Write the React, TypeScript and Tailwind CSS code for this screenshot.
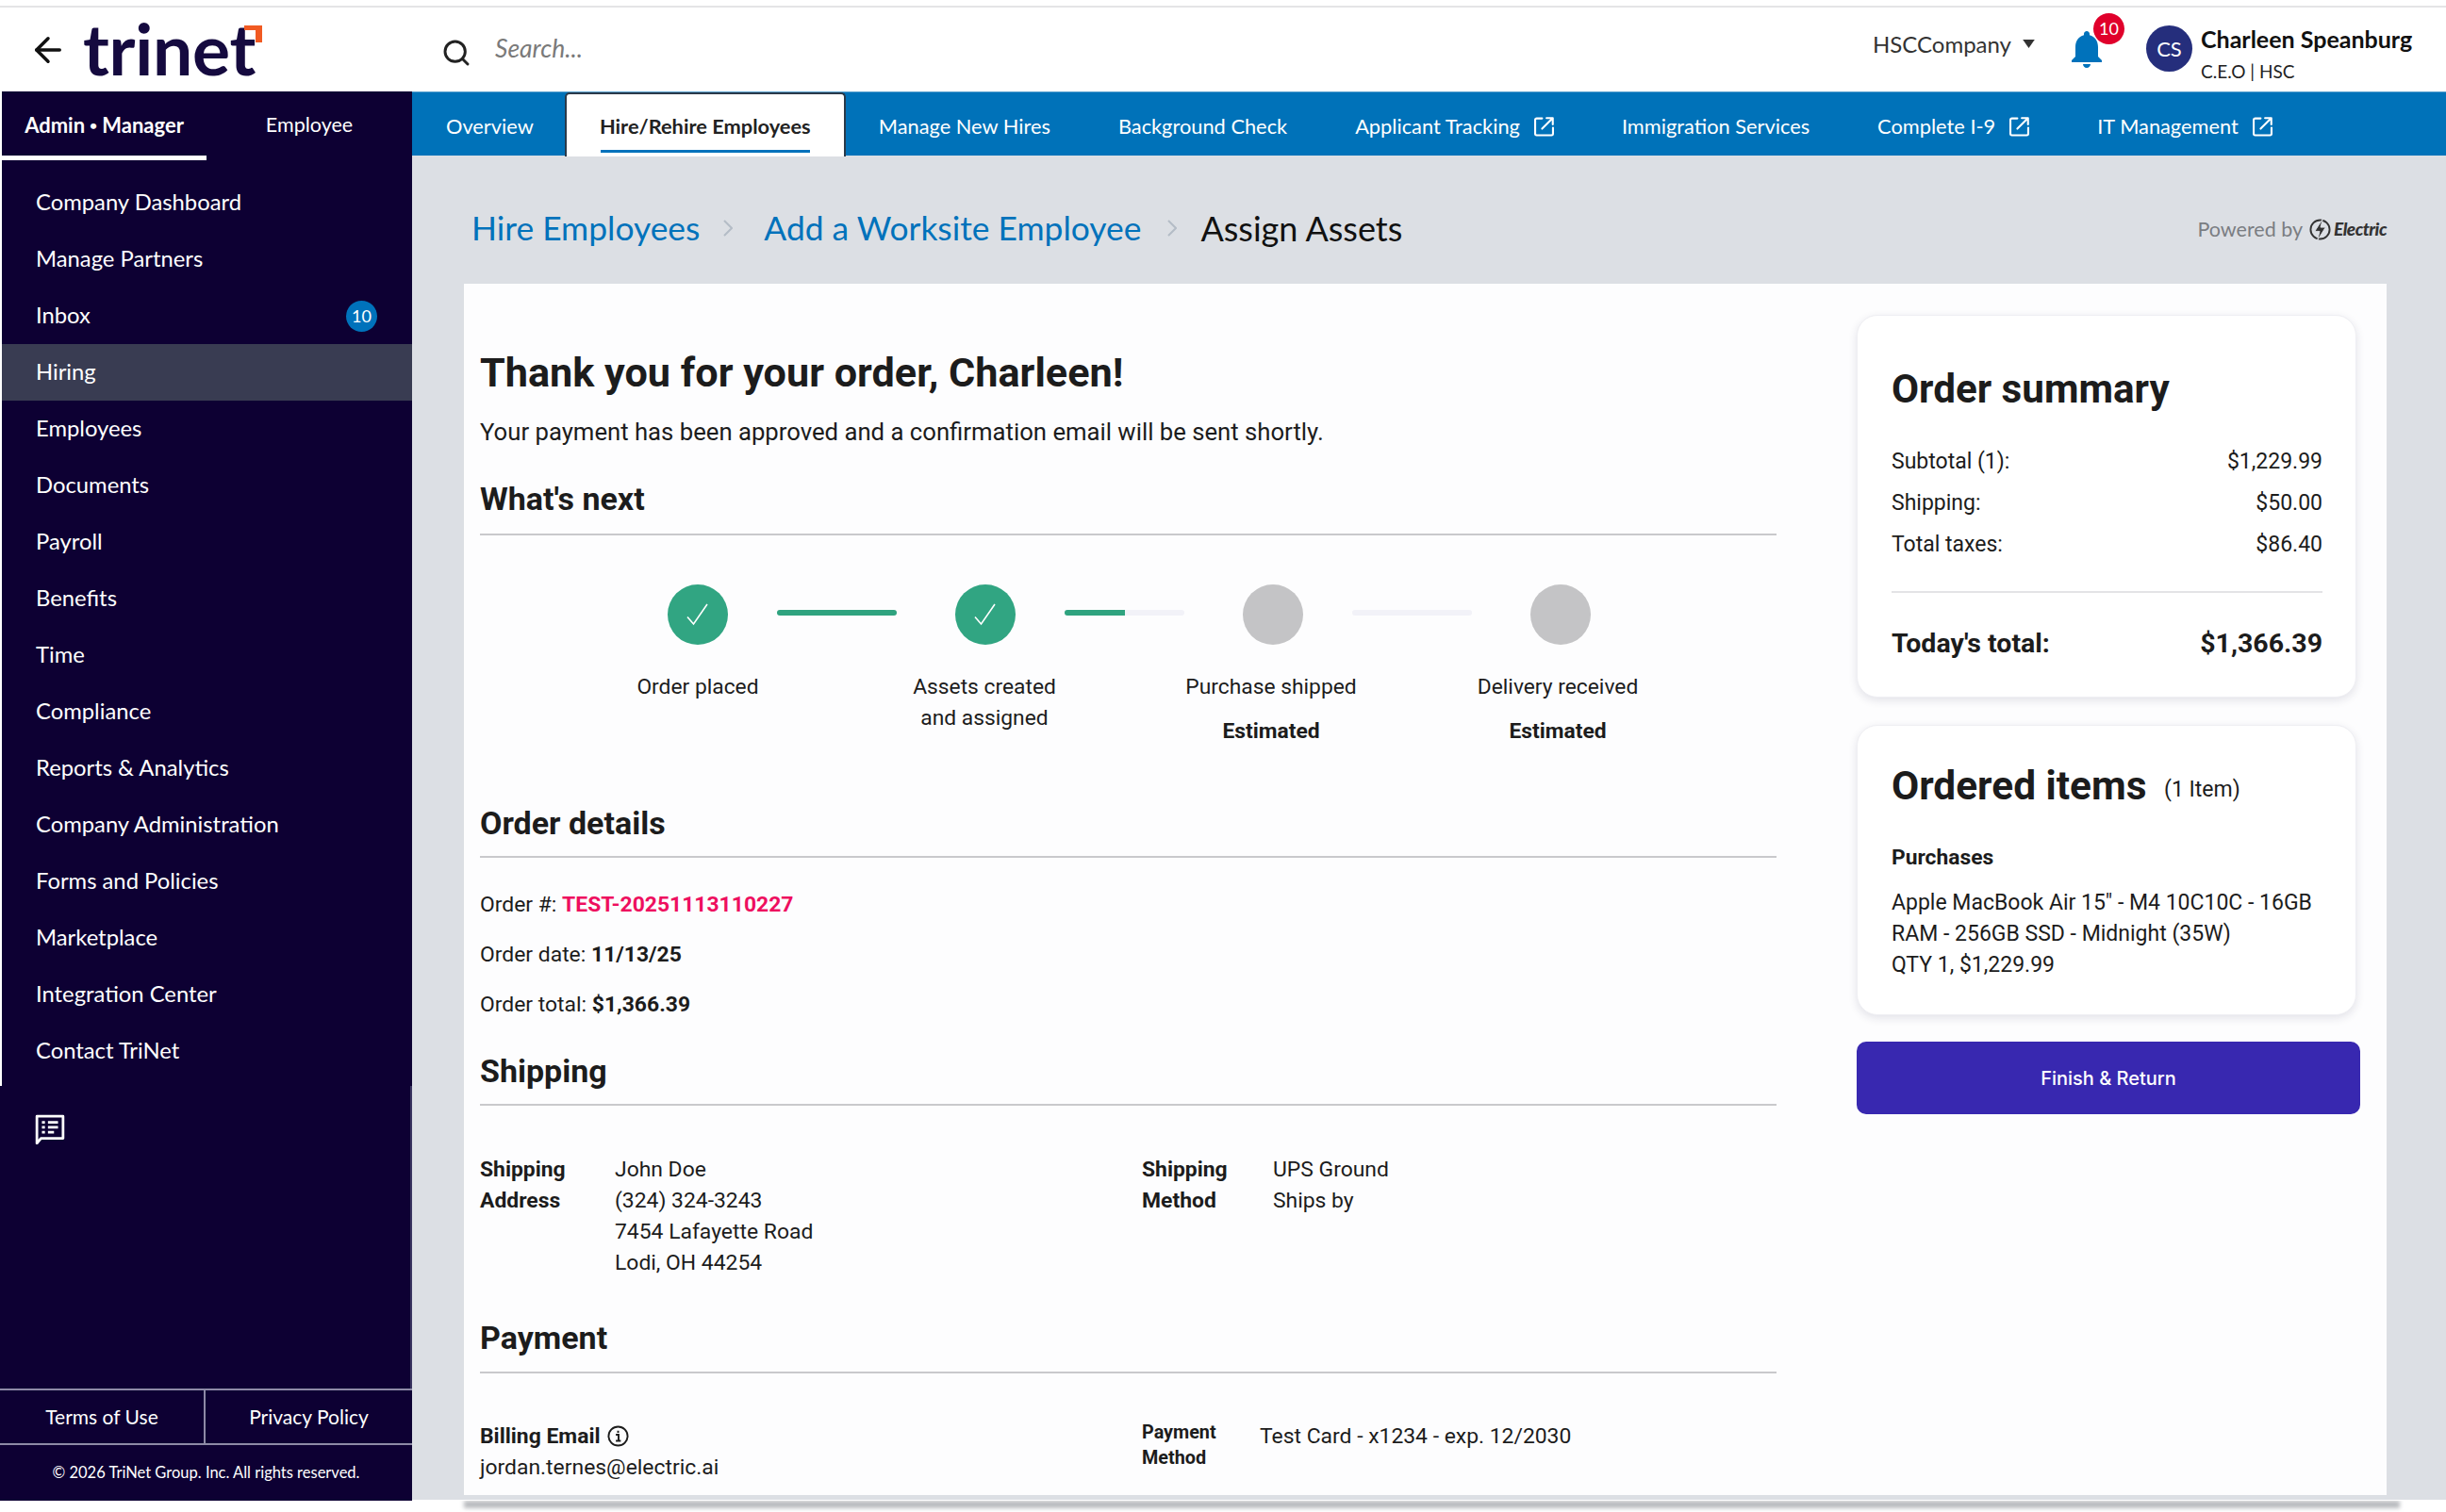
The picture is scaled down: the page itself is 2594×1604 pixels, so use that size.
import { ArrowLeft, Search } from "lucide-react";

const sideItems = ["Company Dashboard","Manage Partners","Inbox","Hiring","Employees","Documents","Payroll","Benefits","Time","Compliance","Reports & Analytics","Company Administration","Forms and Policies","Marketplace","Integration Center","Contact TriNet"];

function ExtIcon() {
  return (
    <svg viewBox="0 0 20 20" className="w-[21px] h-[21px] ml-[15px]" fill="none" stroke="white" strokeWidth="2" strokeLinecap="round" strokeLinejoin="round">
      <path d="M8 1.5H2.5a1.5 1.5 0 0 0-1.5 1.5v14a1.5 1.5 0 0 0 1.5 1.5h15a1.5 1.5 0 0 0 1.5-1.5V11" />
      <path d="M8 12 18.5 1.5M12.5 1.2h6.3v6.3" />
    </svg>
  );
}

function Tab({ label, ext }: { label: string; ext?: boolean }) {
  return (
    <div className="h-full px-[36px] flex items-center text-white text-[21.8px] pt-[6px]">
      {label}
      {ext && <ExtIcon />}
    </div>
  );
}

function Heading({ children, className }: { children: string; className: string }) {
  return <h2 className={"text-[34px] leading-[44px] font-bold text-[#1c1c1c] border-b-2 border-[#c9c9cc] " + className}>{children}</h2>;
}

function Circle({ done }: { done?: boolean }) {
  return (
    <div className={"w-[64px] h-[64px] rounded-full flex items-center justify-center shrink-0 " + (done ? "bg-[#31a582]" : "bg-[#c4c4c6]")}>
      {done && (
        <svg viewBox="0 0 28 28" className="w-[28px] h-[28px]" fill="none" stroke="white" strokeWidth="1.6">
          <path d="M3 16.5 9.5 24 24 3" />
        </svg>
      )}
    </div>
  );
}

function Bar({ fill }: { fill: number }) {
  return (
    <div className="w-[127px] h-[6px] ml-[52px] mr-[62px] -mt-[4px] rounded-full bg-[#f2f2f8] overflow-hidden shrink-0">
      <div className="h-full bg-[#2fa37f]" style={{ width: `${fill}%` }} />
    </div>
  );
}

function Step({ a, b, est }: { a: string; b?: string; est?: boolean }) {
  return (
    <div className="text-center text-[22.8px] leading-[33px] text-[#1c1c1c]">
      <div>{a}</div>
      {b && <div>{b}</div>}
      {est && <div className="font-bold mt-[14px]">Estimated</div>}
    </div>
  );
}

function Row({ l, r }: { l: string; r: string }) {
  return (
    <div className="flex justify-between h-[44px] items-center text-[23px] text-[#1c1c1c]">
      <span>{l}</span>
      <span>{r}</span>
    </div>
  );
}

export default function App() {
  return (
    <div className="w-[2594px] h-[1604px] overflow-hidden bg-white flex flex-col font-['Lato',sans-serif]">
      <div className="h-[8px] border-b-2 border-[#e4e4e6] shrink-0" />
      {/* header */}
      <header className="h-[89px] shrink-0 flex items-center relative">
        <ArrowLeft className="w-[42px] h-[42px] ml-[30px] text-[#111]" strokeWidth={2} />
        <div className="relative ml-[16px] -mt-[3px] h-[60px] w-[186px] flex items-center">
          <span className="text-[75px] leading-[60px] font-bold tracking-[-0.3px] text-[#150a3f] font-['Lato',sans-serif]">trinet</span>
          <svg viewBox="0 0 19 18" className="absolute right-[-4px] top-[6px] w-[19px] h-[18px]">
            <path d="M0 0H19V18H12V5H0Z" fill="#f15a22" />
          </svg>
        </div>
        <Search className="w-[32px] h-[32px] ml-[194px] mt-[6px] text-[#222]" strokeWidth={2.2} />
        <span className="ml-[25px] mb-[2px] italic text-[26.5px] text-[#7a7a7a]">Search...</span>
        <div className="ml-auto flex items-center">
          <span className="text-[24px] text-[#333] mb-[12px]">HSCCompany</span>
          <svg viewBox="0 0 14 10" className="w-[15px] h-[9px] ml-[11px] mb-[12px]"><path d="M0 0H14L7 10Z" fill="#333" /></svg>
          <div className="relative ml-[30px] w-[48px] h-[48px] -mt-[2px]">
            <svg viewBox="0 0 24 24" className="w-[48px] h-[48px]" fill="#0072bb">
              <path d="M12 22c1.1 0 2-.9 2-2h-4c0 1.1.89 2 2 2zm6-6v-5c0-3.07-1.64-5.64-4.5-6.32V4c0-.83-.67-1.5-1.5-1.5s-1.5.67-1.5 1.5v.68C7.63 5.36 6 7.92 6 11v5l-2 2v1h16v-1l-2-2z" />
            </svg>
            <span className="absolute left-[31px] top-[-14px] w-[33px] h-[33px] rounded-full bg-[#e0002b] text-white text-[18px] flex items-center justify-center">10</span>
          </div>
          <div className="ml-[39px] w-[49px] h-[49px] rounded-full bg-[#252e7c] text-white text-[22px] flex items-center justify-center mb-[2px]">CS</div>
          <div className="ml-[9px] w-[260px] h-[70px] pt-[8px]">
            <div className="text-[25px] font-bold leading-[30px] text-[#111]">Charleen Speanburg</div>
            <div className="text-[19px] leading-[24px] mt-[8px] text-[#222]">C.E.O | HSC</div>
          </div>
        </div>
      </header>

      <div className="flex flex-1 min-h-0">
        {/* sidebar */}
        <aside className="w-[437px] shrink-0 bg-[#0d0033] text-white flex flex-col">
          <div className="h-[1055px] border-l-2 border-white">
            <div className="flex h-[73px]">
              <div className="w-[217px] h-[73px] border-b-[5px] border-white font-bold text-[22px] flex items-center justify-center pt-[3px]">Admin <span className="text-[14px] mx-[5px]">•</span> Manager</div>
              <div className="flex-1 flex items-center justify-center text-[21.5px] pb-[2px]">Employee</div>
            </div>
            <nav className="mt-[15px]">
              {sideItems.map((s) => (
                <div key={s} className={"h-[60px] flex items-center pl-[36px] pr-[37px] text-[23.8px] justify-between " + (s === "Hiring" ? "bg-[#393c52]" : "")}>
                  <span>{s}</span>
                  {s === "Inbox" && <span className="w-[33px] h-[33px] rounded-full bg-[#0072bb] text-[18px] flex items-center justify-center">10</span>}
                </div>
              ))}
            </nav>
          </div>
          <div className="flex-1 border-r-2 border-[#3a3560]">
            <svg viewBox="0 0 30 30" className="w-[32px] h-[32px] ml-[37px] mt-[30px]" fill="none" stroke="white" strokeWidth="2.6">
              <path d="M2 2H28V24H6L2 29Z" strokeLinejoin="round" />
              <path d="M7 8h3M13 8h10M7 13h3M13 13h10M7 18h3M13 18h6" />
            </svg>
          </div>
          <div className="h-[60px] shrink-0 border-y-2 border-[#8d8aa6] flex text-[21px]">
            <div className="w-[218px] border-r-2 border-[#8d8aa6] flex items-center justify-center">Terms of Use</div>
            <div className="flex-1 flex items-center justify-center">Privacy Policy</div>
          </div>
          <div className="h-[59px] shrink-0 flex items-center justify-center text-[16.5px]">© 2026 TriNet Group. Inc. All rights reserved.</div>
        </aside>

        {/* right side */}
        <div className="flex-1 flex flex-col min-w-0">
          <div className="h-[68px] shrink-0 bg-[#0072b9] flex items-center border-t border-[#5ca3d0]">
            <Tab label="Overview" />
            <div className="h-[68px] w-[298px] -ml-[3px] -mr-[1px] bg-white border-2 border-b-0 border-[#2a3a4a] rounded-t-[5px] flex flex-col items-center justify-center relative font-bold text-[21.8px] text-[#222]">
              <span className="pt-[4px]">Hire/Rehire Employees</span>
              <span className="absolute left-[36px] right-[36px] bottom-[4px] h-[3px] bg-[#0072bb]" />
            </div>
            <Tab label="Manage New Hires" />
            <Tab label="Background Check" />
            <Tab label="Applicant Tracking" ext />
            <Tab label="Immigration Services" />
            <Tab label="Complete I-9" ext />
            <Tab label="IT Management" ext />
          </div>

          <main className="h-[1426px] shrink-0 bg-[#dcdfe4]">
            <div className="h-[136px] pt-[17px] flex items-center pl-[63px] pr-[63px]">
              <span className="text-[35.4px] text-[#0072bb]">Hire Employees</span>
              <svg viewBox="0 0 10 18" className="w-[10px] h-[18px] ml-[25px] mr-[33px]" fill="none" stroke="#b4bcc6" strokeWidth="2"><path d="M1 1 9 9 1 17" /></svg>
              <span className="text-[35.4px] text-[#0072bb]">Add a Worksite Employee</span>
              <svg viewBox="0 0 10 18" className="w-[10px] h-[18px] ml-[28px] mr-[25px]" fill="none" stroke="#b4bcc6" strokeWidth="2"><path d="M1 1 9 9 1 17" /></svg>
              <span className="text-[36px] text-[#111]">Assign Assets</span>
              <div className="ml-auto flex items-center text-[21.5px] text-[#7a7d82] pt-[3px]">
                Powered by
                <svg viewBox="0 0 24 24" className="w-[23px] h-[23px] ml-[7px] mr-[3px]" fill="none" stroke="#333" strokeWidth="2">
                  <circle cx="12" cy="12" r="10.5" />
                  <path d="M15 0 6 14h5.5l-2.5 10 9-14.5h-5.5Z" fill="#333" stroke="#dcdfe4" strokeWidth="1" />
                </svg>
                <span className="italic font-black text-[19px] text-[#333] tracking-[-0.5px]">Electric</span>
              </div>
            </div>

            <div className="ml-[55px] w-[2039px] h-[1285px] bg-[#fdfdfe] flex font-['Roboto',sans-serif] text-[#1c1c1c]">
              {/* left */}
              <div className="ml-[17px] w-[1375px] shrink-0 pt-[68px]">
                <h1 className="text-[43.2px] leading-[54px] font-bold text-[#1c1c1c]">Thank you for your order, Charleen!</h1>
                <p className="mt-[19px] text-[25.7px] leading-[33px]">Your payment has been approved and a confirmation email will be sent shortly.</p>
                <Heading className="mt-[32px] pb-[15px]">What's next</Heading>
                <div className="flex items-center ml-[199px] mt-[52px]">
                  <Circle done /><Bar fill={100} />
                  <Circle done /><Bar fill={50} />
                  <Circle /><Bar fill={0} />
                  <Circle />
                </div>
                <div className="grid grid-cols-[304px_304px_304px_304px] ml-[79px] mt-[28px] h-[81px]">
                  <Step a="Order placed" />
                  <Step a="Assets created" b="and assigned" />
                  <Step a="Purchase shipped" est />
                  <Step a="Delivery received" est />
                </div>
                <Heading className="mt-[58px] pb-[13px]">Order details</Heading>
                <div className="mt-[33px] flex flex-col gap-[20px] text-[22.9px] leading-[33px]">
                  <div>Order #: <b className="text-[#ee0f5f]">TEST-20251113110227</b></div>
                  <div>Order date: <b>11/13/25</b></div>
                  <div>Order total: <b>$1,366.39</b></div>
                </div>
                <Heading className="mt-[32px] pb-[13px]">Shipping</Heading>
                <div className="mt-[51px] flex text-[22.9px] leading-[33px]">
                  <div className="w-[143px] font-bold">Shipping<br />Address</div>
                  <div className="w-[559px]">John Doe<br />(324) 324-3243<br />7454 Lafayette Road<br />Lodi, OH 44254</div>
                  <div className="w-[139px] font-bold">Shipping<br />Method</div>
                  <div>UPS Ground<br />Ships by</div>
                </div>
                <Heading className="mt-[41px] pb-[14px]">Payment</Heading>
                <div className="mt-[50px] flex text-[22.9px] leading-[33px]">
                  <div className="w-[702px]">
                    <div className="font-bold flex items-center">
                      Billing Email
                      <svg viewBox="0 0 24 24" className="w-[23px] h-[23px] ml-[7px]" fill="none" stroke="#1c1c1c" strokeWidth="2">
                        <circle cx="12" cy="12" r="10.5" />
                        <path d="M9.5 10.5H12.5V17M9.5 17.2H15M12 6v2.4" />
                      </svg>
                    </div>
                    <div>jordan.ternes@electric.ai</div>
                  </div>
                  <div className="w-[125px] font-bold text-[19.8px] leading-[27px] -mt-[1px]">Payment<br />Method</div>
                  <div>Test Card - x1234 - exp. 12/2030</div>
                </div>
              </div>

              {/* right */}
              <div className="ml-[85px] w-[534px] shrink-0 pt-[33px]">
                <section className="w-[530px] h-[406px] bg-white rounded-[22px] border border-[#efeff3] shadow-[0_3px_10px_rgba(30,30,70,0.12)] pl-[36px] pr-[35px] pt-[53px]">
                  <h2 className="text-[42.2px] leading-[50px] font-bold">Order summary</h2>
                  <div className="mt-[30px]">
                    <Row l="Subtotal (1):" r="$1,229.99" />
                    <Row l="Shipping:" r="$50.00" />
                    <Row l="Total taxes:" r="$86.40" />
                  </div>
                  <div className="mt-[27px] border-t-2 border-[#e3e3e6] pt-[34px] flex justify-between items-center text-[28.5px] leading-[40px] font-bold">
                    <span>Today's total:</span>
                    <span>$1,366.39</span>
                  </div>
                </section>
                <section className="w-[530px] h-[308px] mt-[29px] bg-white rounded-[22px] border border-[#efeff3] shadow-[0_3px_10px_rgba(30,30,70,0.12)] pl-[36px] pr-[35px] pt-[37px]">
                  <h2 className="leading-[54px] font-bold text-[42.4px]">Ordered items <span className="font-normal text-[23px] ml-[8px] align-[3px]">(1 Item)</span></h2>
                  <div className="mt-[28px] font-bold text-[22.8px] leading-[33px]">Purchases</div>
                  <div className="mt-[15px] text-[23px] leading-[33px]">Apple MacBook Air 15" - M4 10C10C - 16GB RAM - 256GB SSD - Midnight (35W)<br />QTY 1, $1,229.99</div>
                </section>
                <button className="mt-[28px] w-[534px] h-[77px] rounded-[10px] bg-[#3828b0] text-white text-[20px] font-medium font-['Inter',sans-serif]">Finish &amp; Return</button>
              </div>
            </div>
          </main>
        </div>
      </div>
      <div className="h-[12px] shrink-0 relative overflow-hidden">
        <div className="ml-[492px] w-[2053px] h-[8px] bg-[#b9bbbf] blur-[2px]" />
      </div>
    </div>
  );
}
